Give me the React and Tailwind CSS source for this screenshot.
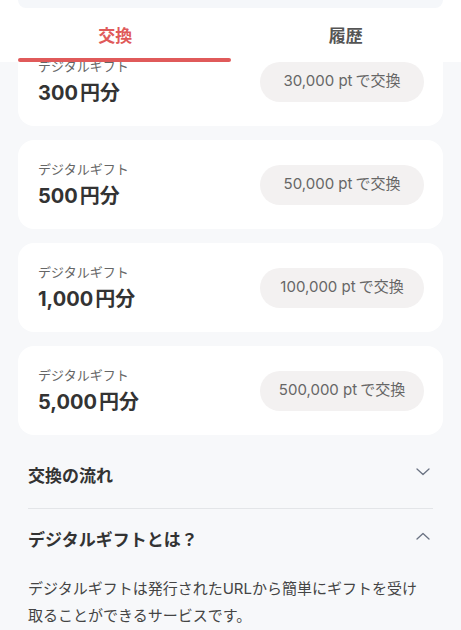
import { useState } from 'react';

const gifts = [
  { amount: '300', pt: '30,000' },
  { amount: '500', pt: '50,000' },
  { amount: '1,000', pt: '100,000' },
  { amount: '5,000', pt: '500,000' },
];

const font = { fontFamily: 'Inter, "Noto Sans CJK JP", "Noto Sans", sans-serif' };

function Chevron({ up }) {
  return (
    <svg width="14" height="8" viewBox="0 0 14 8" fill="none" className="text-gray-500">
      <path
        d={up ? 'M1 7L7 1.5L13 7' : 'M1 1L7 6.5L13 1'}
        stroke="currentColor"
        strokeWidth="1.3"
        strokeLinecap="round"
        strokeLinejoin="round"
      />
    </svg>
  );
}

export default function App() {
  const [tab, setTab] = useState('exchange');
  const [open, setOpen] = useState({ flow: false, about: true });

  return (
    <div className="min-h-screen bg-[#f7f8fa] text-[#333]" style={font}>
      {/* header + tabs */}
      <div className="relative z-10 bg-white">
        <div className="mx-[18px] h-[8px] rounded-b-[16px] bg-[#f5f7fa]" />
        <div className="flex h-[54px]">
          <button
            onClick={() => setTab('exchange')}
            className="relative flex-1 pt-[4px] text-center text-[17px] font-bold"
          >
            <span className={tab === 'exchange' ? 'text-[#e05a5a]' : 'text-[#555]'}>交換</span>
            {tab === 'exchange' && (
              <span className="absolute bottom-[0px] left-[18px] right-[0px] h-[4px] rounded-full bg-[#e05a5a]" />
            )}
          </button>
          <button
            onClick={() => setTab('history')}
            className="relative flex-1 pt-[4px] text-center text-[17px] font-bold"
          >
            <span className={tab === 'history' ? 'text-[#e05a5a]' : 'text-[#555]'}>履歴</span>
            {tab === 'history' && (
              <span className="absolute bottom-[0px] left-[0px] right-[18px] h-[4px] rounded-full bg-[#e05a5a]" />
            )}
          </button>
        </div>
      </div>

      {/* gift list */}
      <div className="-mt-[25px] flex flex-col gap-[14px] px-[18px]">
        {gifts.map((g) => (
          <div
            key={g.amount}
            className="flex h-[89px] items-center justify-between rounded-[16px] bg-white pl-[20px] pr-[19px]"
          >
            <div className="flex flex-col">
              <span className="text-[13px] leading-[18px] text-[#666]">デジタルギフト</span>
              <span className="mt-[4px] text-[20px] font-bold leading-[28px] text-[#333]">
                {g.amount}<span className="ml-[2px]">円分</span>
              </span>
            </div>
            <button className="flex h-[40px] w-[164px] items-center justify-center rounded-full bg-[#f3f1f1] text-[15px] text-[#666]">
              {g.pt} pt<span className="ml-[3px]">で交換</span>
            </button>
          </div>
        ))}
      </div>

      {/* accordion */}
      <div className="mt-[10px] px-[28px]">
        <button
          onClick={() => setOpen({ ...open, flow: !open.flow })}
          className="flex h-[64px] w-full items-center justify-between border-b border-[#e3e5e8] pr-[3px]"
        >
          <span className="text-[17px] font-bold text-[#333]">交換の流れ</span>
          <span className="-mt-[10px]"><Chevron up={open.flow} /></span>
        </button>
        <button
          onClick={() => setOpen({ ...open, about: !open.about })}
          className="flex h-[64px] w-full items-center justify-between pr-[3px]"
        >
          <span className="text-[17px] font-bold text-[#333]">デジタルギフトとは？</span>
          <span className="-mt-[10px]"><Chevron up={open.about} /></span>
        </button>
        {open.about && (
          <p className="mt-[2px] max-w-[400px] text-[15px] leading-[27px] text-[#444]">
            デジタルギフトは発行されたURLから簡単にギフトを受け取ることができるサービスです。
          </p>
        )}
      </div>
    </div>
  );
}
